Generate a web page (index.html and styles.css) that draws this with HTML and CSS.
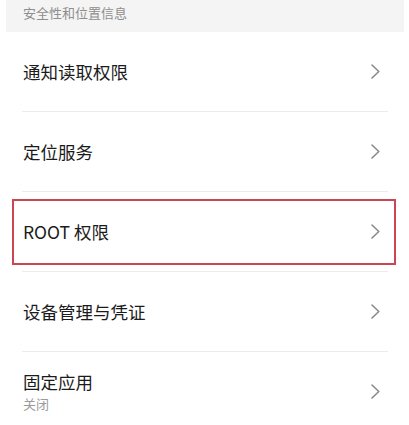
FILE: index.html
```html
<!DOCTYPE html>
<html lang="zh-CN">
<head>
<meta charset="utf-8">
<link rel="stylesheet" href="styles.css">
</head>
<body>
<div class="page">
  <div class="section-header">安全性和位置信息</div>
  <ul class="list">
    <li class="row">
      <div class="texts"><span class="title">通知读取权限</span></div>
      <svg class="chev" viewBox="0 0 9 15" width="9" height="15"><polyline points="1,1 7.8,7.5 1,14" /></svg>
    </li>
    <li class="row">
      <div class="texts"><span class="title">定位服务</span></div>
      <svg class="chev" viewBox="0 0 9 15" width="9" height="15"><polyline points="1,1 7.8,7.5 1,14" /></svg>
    </li>
    <li class="row highlighted">
      <div class="texts"><span class="title">ROOT 权限</span></div>
      <svg class="chev" viewBox="0 0 9 15" width="9" height="15"><polyline points="1,1 7.8,7.5 1,14" /></svg>
      <div class="mark"></div>
    </li>
    <li class="row">
      <div class="texts"><span class="title">设备管理与凭证</span></div>
      <svg class="chev" viewBox="0 0 9 15" width="9" height="15"><polyline points="1,1 7.8,7.5 1,14" /></svg>
    </li>
    <li class="row">
      <div class="texts"><span class="title">固定应用</span><span class="sub">关闭</span></div>
      <svg class="chev" viewBox="0 0 9 15" width="9" height="15"><polyline points="1,1 7.8,7.5 1,14" /></svg>
    </li>
  </ul>
</div>
</body>
</html>
```
FILE: styles.css
```css
html, body {
  margin: 0;
  padding: 0;
  background: #ffffff;
}
body {
  font-family: "Noto Sans CJK SC", "Noto Sans", sans-serif;
  width: 409px;
  height: 425px;
  overflow: hidden;
}
.page {
  display: flex;
  flex-direction: column;
}
.section-header {
  margin: 0 5px 0 6px;
  height: 32px;
  background: #f4f4f4;
  color: #8e8e8e;
  font-size: 13px;
  line-height: 26px;
  padding-left: 17px;
  box-sizing: border-box;
}
.list {
  list-style: none;
  margin: 0 21px 0 22px;
  padding: 0;
}
.row {
  position: relative;
  height: 80px;
  box-sizing: border-box;
  border-bottom: 1px solid #ececec;
  display: flex;
  align-items: center;
  justify-content: space-between;
  padding: 0 8px 0 1px;
}
.texts {
  display: flex;
  flex-direction: column;
}
.title {
  font-size: 17.5px;
  line-height: 24px;
  color: #1b1b1b;
}
.sub {
  font-size: 13px;
  line-height: 20px;
  color: #9a9a9a;
}
.chev {
  fill: none;
  stroke: #8a8a8a;
  stroke-width: 1.6;
  stroke-linecap: round;
  stroke-linejoin: round;
}
.mark {
  position: absolute;
  left: -10px;
  right: -8px;
  top: 7px;
  height: 66px;
  box-sizing: border-box;
  border: 2px solid #cc4553;
}
```
